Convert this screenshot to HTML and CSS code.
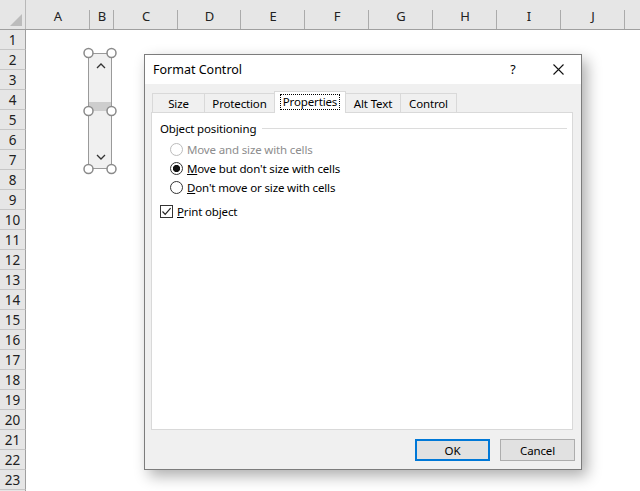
FILE: index.html
```html
<!DOCTYPE html>
<html>
<head>
<meta charset="utf-8">
<title>Format Control</title>
<link rel="stylesheet" href="styles.css">
</head>
<body>
<div class="sheet">
  <div class="colhead">
    <div class="corner"><span class="tri"></span></div>
    <div class="ch w64">A</div>
    <div class="ch w24">B</div>
    <div class="ch w64">C</div>
    <div class="ch w63">D</div>
    <div class="ch w64">E</div>
    <div class="ch w64">F</div>
    <div class="ch w64">G</div>
    <div class="ch w64">H</div>
    <div class="ch w64">I</div>
    <div class="ch w64">J</div>
    <div class="ch rest"></div>
  </div>
  <div class="rows">
    <div class="row"><div class="rh">1</div></div>
    <div class="row"><div class="rh">2</div></div>
    <div class="row"><div class="rh">3</div></div>
    <div class="row"><div class="rh">4</div></div>
    <div class="row"><div class="rh">5</div></div>
    <div class="row"><div class="rh">6</div></div>
    <div class="row"><div class="rh">7</div></div>
    <div class="row"><div class="rh">8</div></div>
    <div class="row"><div class="rh">9</div></div>
    <div class="row"><div class="rh">10</div></div>
    <div class="row"><div class="rh">11</div></div>
    <div class="row"><div class="rh">12</div></div>
    <div class="row"><div class="rh">13</div></div>
    <div class="row"><div class="rh">14</div></div>
    <div class="row"><div class="rh">15</div></div>
    <div class="row"><div class="rh">16</div></div>
    <div class="row"><div class="rh">17</div></div>
    <div class="row"><div class="rh">18</div></div>
    <div class="row"><div class="rh">19</div></div>
    <div class="row"><div class="rh">20</div></div>
    <div class="row"><div class="rh">21</div></div>
    <div class="row"><div class="rh">22</div></div>
    <div class="row"><div class="rh">23</div></div>
    <div class="row"><div class="rh"></div></div>
  </div>

  <svg class="spin" width="36" height="130" viewBox="0 0 36 130">
    <rect x="6.5" y="7.5" width="23" height="115" fill="#f0f0f0" stroke="#9a9a9a" stroke-width="1"/>
    <rect x="7" y="56" width="22" height="9" fill="#cdcdcd"/>
    <polyline points="15,22 19,18 23,22" fill="none" stroke="#333" stroke-width="1.3"/>
    <polyline points="15,109 19,113 23,109" fill="none" stroke="#333" stroke-width="1.3"/>
    <g fill="#fff" stroke="#8a8a8a" stroke-width="1.5">
      <circle cx="6.5" cy="7" r="4.5"/>
      <circle cx="29.5" cy="7" r="4.5"/>
      <circle cx="6.5" cy="65" r="4.5"/>
      <circle cx="29.5" cy="65" r="4.5"/>
      <circle cx="6.5" cy="123" r="4.5"/>
      <circle cx="29.5" cy="123" r="4.5"/>
    </g>
  </svg>

  <div class="dialog">
    <div class="titlebar">
      <span class="title">Format Control</span>
      <span class="help">?</span>
      <svg class="close" width="11" height="11" viewBox="0 0 11 11">
        <path d="M0.5 0.5 L10.5 10.5 M10.5 0.5 L0.5 10.5" stroke="#111" stroke-width="1.1" fill="none"/>
      </svg>
    </div>
    <div class="dbody">
      <div class="tabs">
        <div class="tab t-size">Size</div>
        <div class="tab t-prot">Protection</div>
        <div class="tab sel t-props"><span class="focus">Properties</span></div>
        <div class="tab t-alt">Alt Text</div>
        <div class="tab t-ctrl">Control</div>
      </div>
      <div class="panel">
        <div class="group">Object positioning</div>
        <div class="opt disabled"><span class="radio"></span><span>Move and size with cells</span></div>
        <div class="opt"><span class="radio on"></span><span><u>M</u>ove but don't size with cells</span></div>
        <div class="opt"><span class="radio"></span><span><u>D</u>on't move or size with cells</span></div>
        <div class="chk"><span class="box"><svg width="11" height="11" viewBox="0 0 11 11"><path d="M1.5 5.5 L4.2 8.3 L9.6 2.2" fill="none" stroke="#222" stroke-width="1.2"/></svg></span><span><u>P</u>rint object</span></div>
      </div>
      <div class="footer">
        <div class="btn def">OK</div>
        <div class="btn">Cancel</div>
      </div>
    </div>
  </div>
</div>
</body>
</html>
```

FILE: styles.css
```css
html, body {
  margin: 0;
  padding: 0;
  background: #fff;
}
.sheet {
  position: relative;
  width: 640px;
  height: 491px;
  overflow: hidden;
  background: #fff;
  font-family: "Noto Sans", "Liberation Sans", sans-serif;
}
.colhead {
  display: flex;
  height: 30px;
  box-sizing: border-box;
  border-bottom: 1px solid #9f9f9f;
  background: #e6e6e6;
}
.corner {
  width: 26px;
  flex: none;
  box-sizing: border-box;
  border-right: 1px solid #b8b8b8;
  display: flex;
  align-items: flex-end;
  justify-content: flex-end;
  padding: 0 3px 3px 0;
}
.tri {
  width: 0;
  height: 0;
  border-left: 12px solid transparent;
  border-bottom: 12px solid #bcbcbc;
}
.ch {
  flex: none;
  box-sizing: border-box;
  display: flex;
  align-items: center;
  justify-content: center;
  padding-top: 2px;
  font-size: 13px;
  color: #222;
  background: linear-gradient(#ababab, #ababab) right bottom / 1px 19px no-repeat, #e6e6e6;
}
.w64 { width: 64px; }
.w63 { width: 63px; }
.w24 { width: 24px; }
.rest { flex: 1; background: #e6e6e6; }
.rows {
  display: flex;
  flex-direction: column;
}
.row {
  height: 20px;
  display: flex;
}
.rh {
  width: 26px;
  height: 20px;
  box-sizing: border-box;
  border-right: 1px solid #9f9f9f;
  border-bottom: 1px solid #c6c6c6;
  background: #e6e6e6;
  display: flex;
  align-items: center;
  justify-content: center;
  font-size: 13.5px;
  color: #222;
}
.spin {
  position: absolute;
  left: 82px;
  top: 46px;
}

/* dialog */
.dialog {
  position: absolute;
  left: 144px;
  top: 54px;
  width: 438px;
  height: 416px;
  box-sizing: border-box;
  border: 1px solid #7c7c7c;
  background: #f0f0f0;
  box-shadow: 5px 6px 14px rgba(0, 0, 0, 0.32);
  font-size: 11.5px;
  letter-spacing: -0.15px;
  color: #000;
  display: flex;
  flex-direction: column;
}
.titlebar {
  height: 29px;
  background: #fff;
  display: flex;
  align-items: center;
  padding-left: 8px;
  font-size: 12.5px;
  letter-spacing: 0;
}
.title { flex: 1; }
.help {
  width: 10px;
  text-align: center;
  margin-right: 35px;
  font-size: 12.5px;
}
.close {
  margin-right: 17px;
}
.dbody {
  flex: 1;
  display: flex;
  flex-direction: column;
  padding: 7px 8px 0 6px;
}
.tabs {
  display: flex;
  align-items: flex-end;
  height: 21px;
  padding-left: 1px;
}
.tab {
  height: 19px;
  box-sizing: border-box;
  border: 1px solid #d9d9d9;
  border-bottom: none;
  margin-left: -1px;
  display: flex;
  align-items: center;
  justify-content: center;
  padding-top: 1px;
  background: #f0f0f0;
}
.tab:first-child { margin-left: 0; }
.t-size { width: 53px; }
.t-prot { width: 71px; }
.t-props { width: 72px; }
.t-alt { width: 56px; }
.t-ctrl { width: 57px; }
.tab.sel {
  height: 22px;
  margin-bottom: -1px;
  background: #fff;
  position: relative;
  z-index: 1;
  padding-top: 0;
  padding-bottom: 1px;
}
.focus {
  outline: 1px dotted #000;
  outline-offset: 0;
  padding: 0 2px;
  line-height: 14px;
}
.panel {
  height: 318px;
  box-sizing: border-box;
  border: 1px solid #d9d9d9;
  background: #fff;
  padding: 7px 5px 0 8px;
}
.group {
  display: flex;
  align-items: center;
  gap: 6px;
  height: 17px;
}
.group::after {
  content: "";
  flex: 1;
  border-top: 1px solid #dcdcdc;
}
.opt {
  display: flex;
  align-items: center;
  height: 19px;
  padding-left: 10px;
  gap: 4px;
}
.group + .opt { margin-top: 3px; }
.radio {
  width: 13px;
  height: 13px;
  box-sizing: border-box;
  border: 1px solid #333;
  border-radius: 50%;
  background: #fff;
  flex: none;
}
.radio.on {
  background: radial-gradient(circle, #111 0, #111 3.3px, #fff 3.9px);
}
.opt.disabled { color: #8d8d8d; }
.opt.disabled .radio { border-color: #bcbcbc; }
.chk {
  display: flex;
  align-items: center;
  gap: 4px;
  height: 19px;
  margin-top: 5px;
}
.box {
  width: 13px;
  height: 13px;
  box-sizing: border-box;
  border: 1px solid #333;
  background: #fff;
  display: flex;
  align-items: center;
  justify-content: center;
  flex: none;
}
.box svg { display: block; }
.footer {
  display: flex;
  justify-content: flex-end;
  gap: 10px;
  margin-top: 9px;
  margin-right: -2px;
}
.btn {
  width: 75px;
  height: 22px;
  box-sizing: border-box;
  border: 1px solid #adadad;
  background: #e1e1e1;
  display: flex;
  align-items: center;
  justify-content: center;
}
.btn.def {
  border: 2px solid #0078d7;
}
```
